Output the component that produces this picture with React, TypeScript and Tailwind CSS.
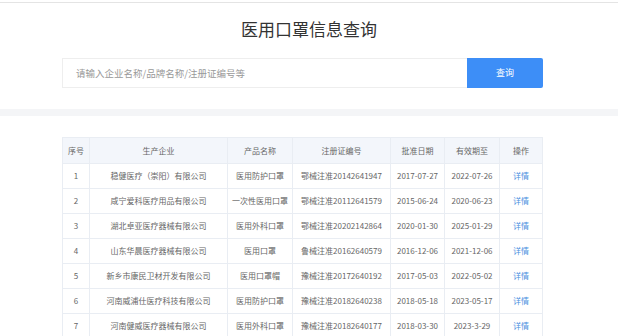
const rows = [
  ["1", "稳健医疗（崇阳）有限公司", "医用防护口罩", "鄂械注准20142641947", "2017-07-27", "2022-07-26"],
  ["2", "咸宁爱科医疗用品有限公司", "一次性医用口罩", "鄂械注准20112641579", "2015-06-24", "2020-06-23"],
  ["3", "湖北卓亚医疗器械有限公司", "医用外科口罩", "鄂械注准20202142864", "2020-01-30", "2025-01-29"],
  ["4", "山东华晨医疗器械有限公司", "医用口罩", "鲁械注准20162640579", "2016-12-06", "2021-12-06"],
  ["5", "新乡市康民卫材开发有限公司", "医用口罩帽", "豫械注准20172640192", "2017-05-03", "2022-05-02"],
  ["6", "河南威浦仕医疗科技有限公司", "医用防护口罩", "豫械注准20182640238", "2018-05-18", "2023-05-17"],
  ["7", "河南健威医疗器械有限公司", "医用外科口罩", "豫械注准20182640177", "2018-03-30", "2023-3-29"],
];

const heads = ["序号", "生产企业", "产品名称", "注册证编号", "批准日期", "有效期至", "操作"];

export default function App() {
  return (
    <div className="w-[618px] h-[336px] overflow-hidden bg-white font-['Noto_Sans_CJK_SC','Noto_Sans',sans-serif]">
      <div className="h-[2px]" />
      <div className="h-px bg-[#e4e4e4]" />

      {/* title + search */}
      <h1 className="pt-[16px] text-center text-[17px] leading-[20px] text-[#333]">医用口罩信息查询</h1>
      <div className="mt-[19px] ml-[62px] flex w-[481px] h-[30px]">
        <div className="flex-1 flex items-center border border-[#eeeeee] border-r-0 pl-[13px] text-[9.5px] text-[#999]">
          请输入企业名称/品牌名称/注册证编号等
        </div>
        <button className="w-[76px] h-full bg-[#3d8ef7] rounded-r-[2px] text-white text-[9px]">查询</button>
      </div>

      <div className="mt-[21px] h-[7px] bg-[#f4f5f7]" />

      {/* table */}
      <table className="mt-[21px] ml-[62px] table-fixed border-collapse text-[8px] text-[#666] text-center">
        <colgroup>
          <col className="w-[27px]" />
          <col className="w-[138px]" />
          <col className="w-[65px]" />
          <col className="w-[98px]" />
          <col className="w-[54px]" />
          <col className="w-[55px]" />
          <col className="w-[43px]" />
        </colgroup>
        <thead>
          <tr className="h-[26px] bg-[#f3f6fb]">
            {heads.map((h) => (
              <th key={h} className="border border-[#e9edf3] font-normal">{h}</th>
            ))}
          </tr>
        </thead>
        <tbody>
          {rows.map((r) => (
            <tr key={r[0]} className="h-[25px]">
              {r.map((c, i) => (
                <td key={i} className="border border-[#e9edf3] whitespace-nowrap">{c}</td>
              ))}
              <td className="border border-[#e9edf3] text-[#4a8fe0]">详情</td>
            </tr>
          ))}
        </tbody>
      </table>
    </div>
  );
}
